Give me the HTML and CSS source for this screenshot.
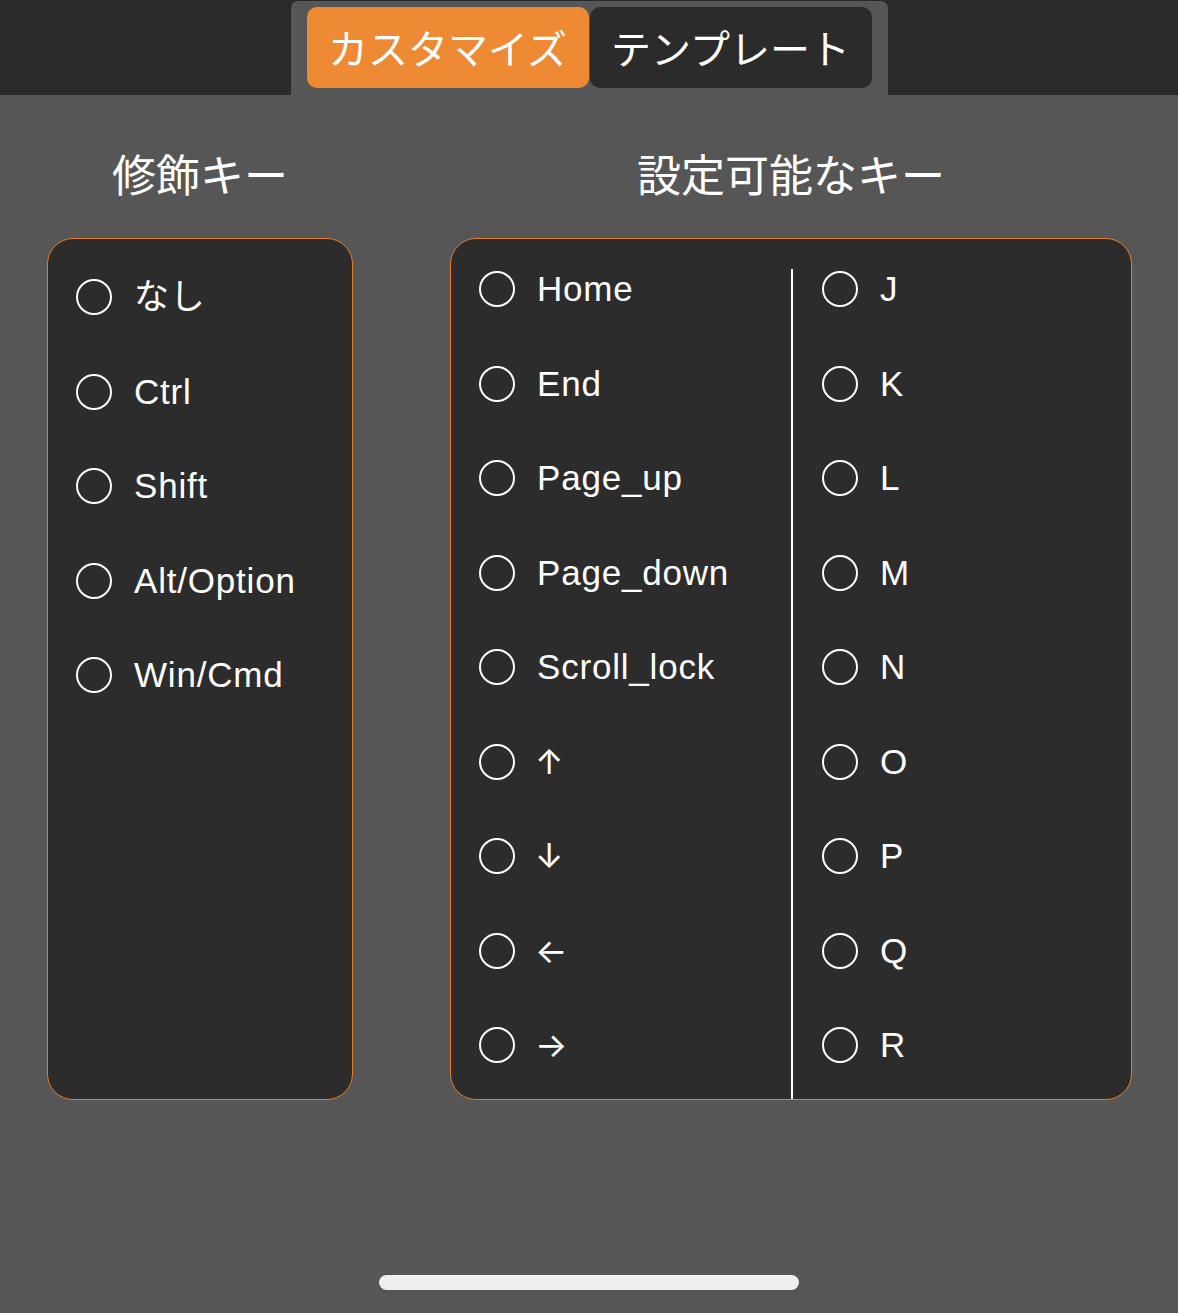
FILE: index.html
```html
<!DOCTYPE html>
<html lang="ja">
<head>
<meta charset="utf-8">
<title>キー設定</title>
<link rel="stylesheet" href="styles.css">
</head>
<body>
<header class="topbar">
  <nav class="tabs">
    <div class="tab tab-active">カスタマイズ</div>
    <div class="tab">テンプレート</div>
  </nav>
</header>
<main class="content">
  <section class="group group-mod">
    <h2 class="group-title">修飾キー</h2>
    <div class="panel panel-mod">
      <div class="col">
        <div class="opt"><span class="radio"></span><span class="label">なし</span></div>
        <div class="opt"><span class="radio"></span><span class="label">Ctrl</span></div>
        <div class="opt"><span class="radio"></span><span class="label">Shift</span></div>
        <div class="opt"><span class="radio"></span><span class="label">Alt/Option</span></div>
        <div class="opt"><span class="radio"></span><span class="label">Win/Cmd</span></div>
      </div>
    </div>
  </section>
  <section class="group group-keys">
    <h2 class="group-title">設定可能なキー</h2>
    <div class="panel panel-keys">
      <div class="col col-left">
        <div class="opt"><span class="radio"></span><span class="label">Home</span></div>
        <div class="opt"><span class="radio"></span><span class="label">End</span></div>
        <div class="opt"><span class="radio"></span><span class="label">Page_up</span></div>
        <div class="opt"><span class="radio"></span><span class="label">Page_down</span></div>
        <div class="opt"><span class="radio"></span><span class="label">Scroll_lock</span></div>
        <div class="opt"><span class="radio"></span><span class="label arrow">↑</span></div>
        <div class="opt"><span class="radio"></span><span class="label arrow">↓</span></div>
        <div class="opt"><span class="radio"></span><span class="label arrow">←</span></div>
        <div class="opt"><span class="radio"></span><span class="label arrow">→</span></div>
      </div>
      <div class="col col-right">
        <div class="opt"><span class="radio"></span><span class="label">J</span></div>
        <div class="opt"><span class="radio"></span><span class="label">K</span></div>
        <div class="opt"><span class="radio"></span><span class="label">L</span></div>
        <div class="opt"><span class="radio"></span><span class="label">M</span></div>
        <div class="opt"><span class="radio"></span><span class="label">N</span></div>
        <div class="opt"><span class="radio"></span><span class="label">O</span></div>
        <div class="opt"><span class="radio"></span><span class="label">P</span></div>
        <div class="opt"><span class="radio"></span><span class="label">Q</span></div>
        <div class="opt"><span class="radio"></span><span class="label">R</span></div>
      </div>
    </div>
  </section>
</main>
<div class="home-bar"><span class="home-indicator"></span></div>
</body>
</html>
```
FILE: styles.css
```css
html, body {
  margin: 0;
  padding: 0;
}
body {
  width: 1178px;
  height: 1313px;
  background: #565656;
  color: #ffffff;
  font-family: "Liberation Sans", "Noto Sans CJK JP", sans-serif;
  display: flex;
  flex-direction: column;
  overflow: hidden;
}
.topbar {
  height: 95px;
  background: #2a2a2a;
  display: flex;
  justify-content: center;
  align-items: flex-end;
  flex: none;
}
.tabs {
  width: 597px;
  height: 94px;
  box-sizing: border-box;
  padding: 6px 16px 7px;
  background: #565656;
  border-radius: 7px 7px 0 0;
  display: flex;
  gap: 1px;
}
.tab {
  width: 282px;
  height: 81px;
  border-radius: 10px;
  background: #2b2b2b;
  display: flex;
  align-items: center;
  justify-content: center;
  font-family: "Noto Sans CJK JP", sans-serif;
  font-size: 40px;
  padding-bottom: 2px;
  box-sizing: border-box;
}
.tab-active {
  background: #ef8a34;
}
.content {
  display: grid;
  grid-template-columns: 306px 682px;
  column-gap: 97px;
  padding-left: 47px;
  padding-top: 48px;
}
.group {
  display: flex;
  flex-direction: column;
}
.group-title {
  margin: 0 0 35px;
  height: 60px;
  line-height: 60px;
  font-family: "Noto Sans CJK JP", sans-serif;
  font-weight: 400;
  font-size: 44px;
  text-align: center;
}
.panel {
  height: 862px;
  box-sizing: border-box;
  background: #2c2c2c;
  border: 1px solid #e57d24;
  border-radius: 26px;
}
.panel-mod {
  padding: 38px 0 0 28px;
}
.panel-keys {
  display: grid;
  grid-template-columns: 340px 1fr;
  padding-top: 30px;
}
.col {
  display: flex;
  flex-direction: column;
  gap: 54.5px;
}
.col-left {
  padding-left: 28px;
}
.col-right {
  border-left: 2px solid #ffffff;
  padding-left: 29px;
}
.opt {
  height: 40px;
  display: flex;
  align-items: center;
}
.radio {
  width: 36px;
  height: 36px;
  box-sizing: border-box;
  border: 2px solid #ffffff;
  border-radius: 50%;
  flex: none;
}
.label {
  margin-left: 22px;
  font-size: 35px;
  line-height: 40px;
  letter-spacing: 0.8px;
  white-space: nowrap;
}
.arrow {
  font-family: "Inter", sans-serif;
  font-size: 34px;
  letter-spacing: 0;
  margin-left: 20px;
}
.home-bar {
  margin-top: auto;
  height: 38px;
  display: flex;
  justify-content: center;
}
.home-indicator {
  width: 420px;
  height: 15px;
  border-radius: 8px;
  background: #efefef;
}
```
